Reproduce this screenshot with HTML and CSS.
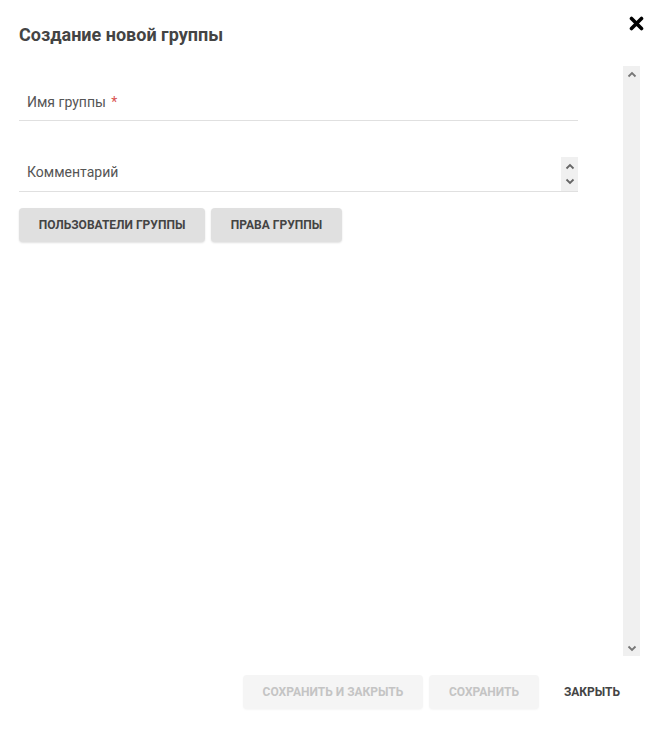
FILE: index.html
```html
<!DOCTYPE html>
<html lang="ru">
<head>
<meta charset="utf-8">
<title>Создание новой группы</title>
<link rel="stylesheet" href="styles.css">
</head>
<body>
<div class="dialog">
  <header class="dialog-header">
    <h1 class="dialog-title">Создание новой группы</h1>
    <button class="close-btn" aria-label="Закрыть">
      <svg width="15" height="15" viewBox="0 0 15 15"><path d="M2.5 2.5 L12.5 12.5 M12.5 2.5 L2.5 12.5" stroke="#000" stroke-width="3.6" stroke-linecap="round"/></svg>
    </button>
  </header>
  <div class="dialog-body">
    <div class="form">
      <div class="field field-name">
        <span class="field-label">Имя группы <span class="req">*</span></span>
      </div>
      <div class="field field-comment">
        <span class="field-label">Комментарий</span>
        <div class="spinner">
          <svg width="10" height="7" viewBox="0 0 10 7"><path d="M1.5 5.5 L5 2 L8.5 5.5" fill="none" stroke="#666" stroke-width="1.8"/></svg>
          <svg width="10" height="7" viewBox="0 0 10 7"><path d="M1.5 1.5 L5 5 L8.5 1.5" fill="none" stroke="#666" stroke-width="1.8"/></svg>
        </div>
      </div>
      <div class="tabs">
        <button class="btn btn-grey btn-users">Пользователи группы</button>
        <button class="btn btn-grey btn-rights">Права группы</button>
      </div>
    </div>
    <div class="scrollbar">
      <svg width="10" height="7" viewBox="0 0 10 7"><path d="M1.5 5.5 L5 2 L8.5 5.5" fill="none" stroke="#777" stroke-width="1.8"/></svg>
      <svg width="10" height="7" viewBox="0 0 10 7"><path d="M1.5 1.5 L5 5 L8.5 1.5" fill="none" stroke="#777" stroke-width="1.8"/></svg>
    </div>
  </div>
  <footer class="dialog-footer">
    <button class="btn btn-disabled btn-save-close">Сохранить и закрыть</button>
    <button class="btn btn-disabled btn-save">Сохранить</button>
    <button class="btn btn-flat btn-close">Закрыть</button>
  </footer>
</div>
</body>
</html>
```

FILE: styles.css
```css
* { box-sizing: border-box; }
html, body { margin: 0; padding: 0; background: #fff; }
body { font-family: Roboto, "Noto Sans", sans-serif; color: #444; }

.dialog {
  width: 660px;
  height: 730px;
  padding: 0 21px 0 19px;
  display: flex;
  flex-direction: column;
}

.dialog-header {
  display: flex;
  justify-content: space-between;
  align-items: flex-start;
  height: 66px;
}
.dialog-title {
  margin: 24px 0 0 0;
  font-size: 18px;
  line-height: 21px;
  font-weight: 700;
  color: #444;
  white-space: nowrap;
}
.close-btn {
  margin: 16px -5px 0 0;
  padding: 0;
  border: 0;
  background: none;
  width: 15px;
  height: 15px;
  display: flex;
}

.dialog-body {
  display: flex;
  justify-content: space-between;
  height: 590px;
}
.form {
  width: 559px;
  display: flex;
  flex-direction: column;
}
.field {
  position: relative;
  border-bottom: 1px solid #e0e0e0;
  display: flex;
  align-items: center;
  padding-left: 8px;
}
.field-name { height: 55px; padding-top: 18px; }
.field-comment { height: 71px; padding-top: 32px; }
.field-label { font-size: 14px; color: #555; line-height: 16px; white-space: nowrap; }
.req { color: #d9534f; margin-left: 2px; }
.spinner {
  position: absolute;
  right: 0;
  bottom: 0;
  width: 17px;
  height: 34px;
  background: #f0f0f0;
  display: flex;
  flex-direction: column;
  align-items: center;
  justify-content: space-around;
  padding: 2px 0;
}

.tabs {
  display: flex;
  gap: 6px;
  margin-top: 16px;
}
.btn {
  font-family: Roboto, "Noto Sans", sans-serif;
  font-size: 12px;
  font-weight: 700;
  text-transform: uppercase;
  white-space: nowrap;
  height: 34px;
  border: 0;
  border-radius: 4px;
  padding: 0;
  line-height: 34px;
  text-align: center;
  flex: none;
}
.btn-grey {
  background: #e0e0e0;
  color: #444;
  box-shadow: 0 1px 2px rgba(0,0,0,0.12);
}
.btn-users { width: 186px; }
.btn-rights { width: 131px; }

.scrollbar {
  width: 17px;
  height: 590px;
  background: #f0f0f0;
  margin-right: -1px;
  display: flex;
  flex-direction: column;
  justify-content: space-between;
  align-items: center;
  padding: 5px 0 4px;
}

.dialog-footer {
  display: flex;
  justify-content: flex-end;
  gap: 6px;
  margin-top: 19px;
}
.btn-disabled {
  background: #f5f5f5;
  color: #c4c4c4;
  box-shadow: 0 1px 2px rgba(0,0,0,0.04);
}
.btn-save-close { width: 180px; }
.btn-save { width: 110px; }
.btn-flat {
  background: none;
  color: #444;
  width: 94px;
}
```
